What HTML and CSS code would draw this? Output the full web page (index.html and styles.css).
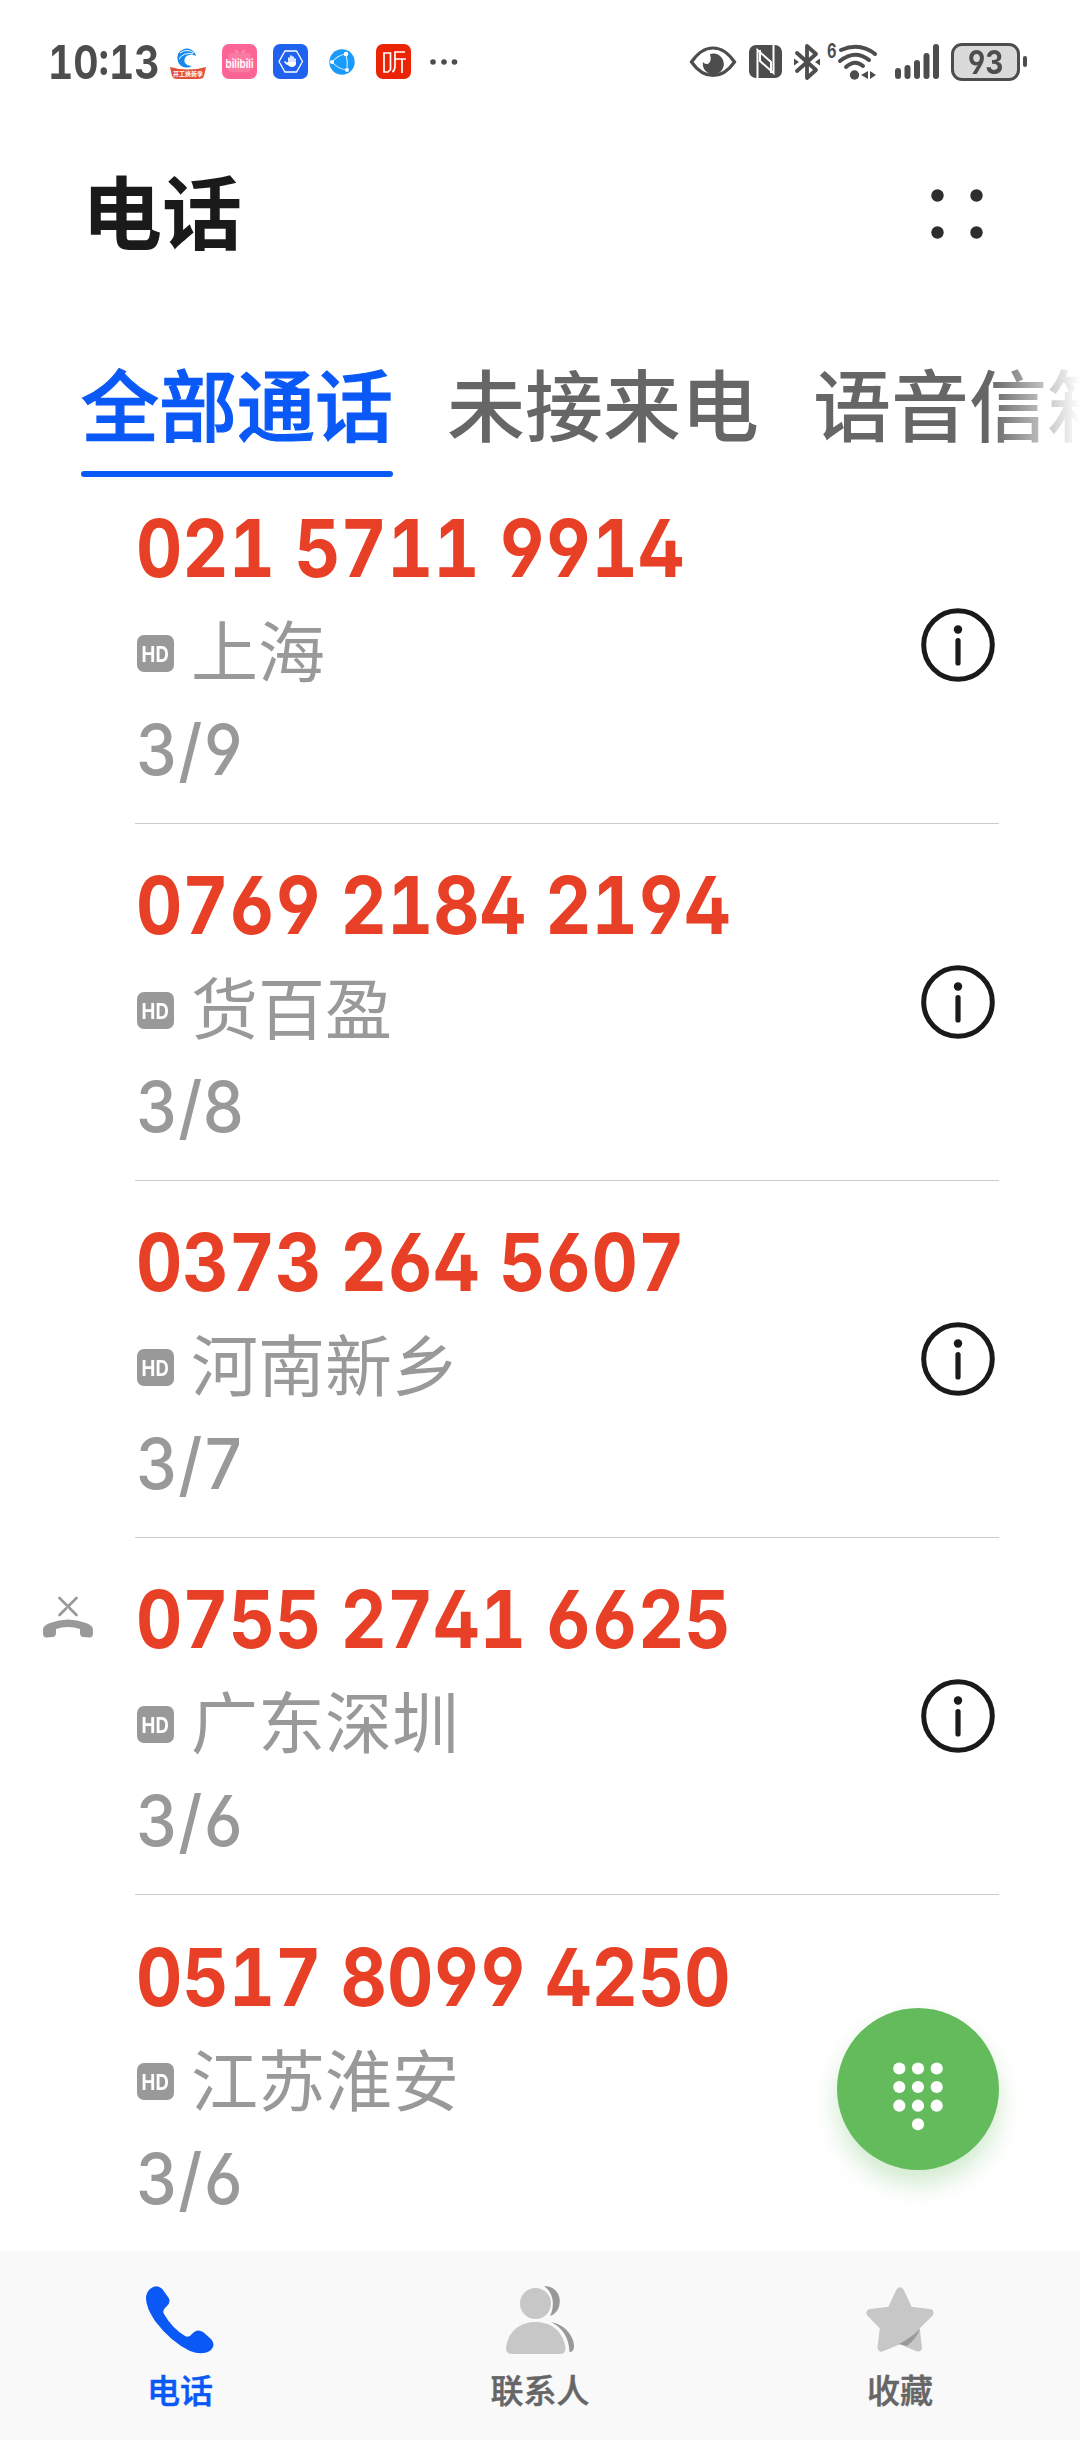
FILE: index.html
```
<!DOCTYPE html>
<html lang="zh-CN">
<head>
    <meta charset="UTF-8">
    <meta name="viewport" content="width=device-width, initial-scale=1.0">
    <title>电话</title>
    <link rel="stylesheet" href="styles.css">
</head>
<body>
    <div class="phone">
        <!-- 状态栏 -->
        <div class="status-bar">
            <div class="time"><span>10:13</span></div>
            <div class="app-icons">
                <svg width="36" height="36" viewBox="0 0 36 36">
                    <path d="M26 12A9.500 9.500 0 1 0 22 22C16 22 13 18 15 14C17 10 22 10 26 12Z" fill="#1488ee"/>
                    <path d="M10 9Q17 4 24 9M9 15Q13 8 23 10" fill="none" stroke="#fff" stroke-width="1"/>
                    <path d="M0 23Q18 28 36 23L34 32Q33 35 29 35H7Q3 35 2 32Z" fill="#e2503a"/>
                    <text x="18" y="32" class="promo">开工焕新季</text>
                </svg>
                <svg width="35" height="35" viewBox="0 0 35 35">
                    <rect width="35" height="35" rx="7" fill="#fb6494"/>
                    <path d="M13 6l3 3M23 6l-3 3" stroke="#fd8fb1" stroke-width="2"/>
                    <rect x="6" y="9" width="23" height="19" rx="4" fill="#fb7aa2"/>
                    <text x="17.500" y="23.500" class="bili" textLength="28" lengthAdjust="spacingAndGlyphs">bilibili</text>
                </svg>
                <svg width="35" height="35" viewBox="0 0 35 35">
                    <rect width="35" height="35" rx="7" fill="#1f62ef"/>
                    <path d="M12 7H23.500L29.500 17.500L23.500 28H12L6 17.500Z" fill="none" stroke="#fff" stroke-width="1.300"/>
                    <path d="M14 20l-2-2M16 20v-6M18 20v-8M20 20v-7M22 20v-5" stroke="#fff" stroke-width="1.700" stroke-linecap="round"/>
                    <path d="M15 18h8v2q-1 3-4 3t-6-4z" fill="#fff"/>
                </svg>
                <svg width="26" height="26" viewBox="0 0 26 26">
                    <circle cx="13" cy="13" r="12.700" fill="#1a9bfa"/>
                    <path d="M17 5Q9 6 3 13Q9 20 18 21M17 5Q19 13 18 21" fill="none" stroke="#c9ecff" stroke-width="1.100"/>
                    <g fill="#fff"><circle cx="17" cy="5" r="2.300"/><circle cx="3" cy="13" r="2"/><circle cx="18" cy="21" r="2"/></g>
                </svg>
                <svg width="35" height="35" viewBox="0 0 35 35">
                    <rect width="35" height="35" rx="7" fill="#ea2405"/>
                    <path d="M8 9H14.500V25.500L12 28H8ZM29 8H19V22Q19 26 16.500 28M19 15H30M26 15V29" fill="none" stroke="#fff" stroke-width="1.700"/>
                </svg>
                <svg width="28" height="6" viewBox="0 0 28 6" fill="#4d4d4d">
                    <circle cx="3" cy="3" r="2.800"/><circle cx="14" cy="3" r="2.800"/><circle cx="24.500" cy="3" r="2.800"/>
                </svg>
            </div>
            <div class="sys-icons">
                <svg class="eye" width="46" height="32" viewBox="0 0 46 32">
                    <path d="M1.500 16Q11 2 23 2T44.500 16Q35 29.500 23 29.500T1.500 16Z" fill="none" stroke="#4d4d4d" stroke-width="3.200"/>
                    <path d="M20 8A10.500 10.500 0 1 1 13 16Q15 19 18.500 17.500Q22 15 20 8Z" fill="#4d4d4d"/>
                </svg>
                <svg class="nfc" width="33" height="33" viewBox="0 0 33 33">
                    <rect width="33" height="33" rx="7" fill="#4d4d4d"/>
                    <path d="M8.500 33V5L22 17V28M24.500 0V28L11 16V5" fill="none" stroke="#fff" stroke-width="2"/>
                </svg>
                <svg class="bt" width="26" height="36" viewBox="0 0 26 36" fill="none" stroke="#4d4d4d" stroke-width="3.800" stroke-linejoin="round" stroke-linecap="round">
                    <path d="M3 9L22 26L13 34V2L22 10L3 27"/>
                    <path d="M0 14.500L5 18L0 21.500ZM26 14.500L21 18L26 21.500Z" fill="#4d4d4d" stroke="none"/>
                </svg>
                <svg class="wifi" width="51" height="38" viewBox="0 0 51 38">
                    <text x="0" y="15" class="wifi-gen" textLength="9.500" lengthAdjust="spacingAndGlyphs">6</text>
                    <g fill="none" stroke="#4d4d4d" stroke-width="4" stroke-linecap="round">
                        <path d="M14 7Q33 -1 48 11M13 18Q28 6 42 17M19 24Q28 16 36 23"/>
                    </g>
                    <circle cx="27.500" cy="32" r="4.700" fill="#4d4d4d"/>
                    <path d="M41 28V36L34 32ZM43 28V36L49 32Z" fill="#4d4d4d"/>
                </svg>
                <svg class="signal" width="45" height="36" viewBox="0 0 45 36" fill="#4d4d4d">
                    <rect x="0" y="24" width="6" height="11" rx="3"/>
                    <rect x="9.500" y="21" width="6" height="14" rx="3"/>
                    <rect x="19" y="16" width="6" height="19" rx="3"/>
                    <rect x="28.500" y="9" width="6" height="26" rx="3"/>
                    <rect x="38" y="0" width="6" height="35" rx="3"/>
                </svg>
                <div class="battery"><span>93</span></div>
                <div class="battery-cap"></div>
            </div>
        </div>

        <header class="header">
            <h1>电话</h1>
            <svg width="52" height="50" viewBox="0 0 52 50" fill="#2e2e2e">
                <circle cx="6.500" cy="6.500" r="6.200"/><circle cx="45.500" cy="6.500" r="6.200"/>
                <circle cx="6.500" cy="43.500" r="6.200"/><circle cx="45.500" cy="43.500" r="6.200"/>
            </svg>
        </header>

        <nav class="tabs">
            <a class="tab active">全部通话</a>
            <a class="tab">未接来电</a>
            <a class="tab">语音信箱</a>
        </nav>

        <svg class="defs">
            <symbol id="info" viewBox="0 0 74 74">
                <circle cx="37" cy="37" r="34.300" fill="none" stroke="#1a1a1a" stroke-width="5"/>
                <circle cx="37" cy="21.500" r="4.200" fill="#1a1a1a"/>
                <path d="M37 32.500V55" stroke="#1a1a1a" stroke-width="5.200" stroke-linecap="round"/>
            </symbol>
        </svg>

        <main class="calls">
            <div class="call">
                <div class="detail">
                    <div class="number">021 5711 9914</div>
                    <div class="place"><span class="hd"><b>HD</b></span>上海</div>
                    <div class="date">3/9</div>
                </div>
                <svg class="info"><use href="#info"/></svg>
            </div>
            <div class="call">
                <div class="detail">
                    <div class="number">0769 2184 2194</div>
                    <div class="place"><span class="hd"><b>HD</b></span>货百盈</div>
                    <div class="date">3/8</div>
                </div>
                <svg class="info"><use href="#info"/></svg>
            </div>
            <div class="call">
                <div class="detail">
                    <div class="number">0373 264 5607</div>
                    <div class="place"><span class="hd"><b>HD</b></span>河南新乡</div>
                    <div class="date">3/7</div>
                </div>
                <svg class="info"><use href="#info"/></svg>
            </div>
            <div class="call">
                <svg class="missed" width="52" height="44" viewBox="0 0 52 44">
                    <path d="M17.500 3L34.500 20M34.500 3L27 10.500M24 13.500L17.500 20" fill="none" stroke="#999" stroke-width="2.700" stroke-linecap="round"/>
                    <path d="M1 38Q0 30 8 28Q26 21 44 28Q52 30 51 38Q51 43 47 42.500L41 42Q38 41.500 38 38V34Q26 30 14 34V38Q14 41.500 11 42L5 42.500Q1 43 1 38Z" fill="#999"/>
                </svg>
                <div class="detail">
                    <div class="number">0755 2741 6625</div>
                    <div class="place"><span class="hd"><b>HD</b></span>广东深圳</div>
                    <div class="date">3/6</div>
                </div>
                <svg class="info"><use href="#info"/></svg>
            </div>
            <div class="call">
                <div class="detail">
                    <div class="number">0517 8099 4250</div>
                    <div class="place"><span class="hd"><b>HD</b></span>江苏淮安</div>
                    <div class="date">3/6</div>
                </div>
            </div>
        </main>

        <!-- 拨号按钮 -->
        <div class="dial">
            <svg width="50" height="69" viewBox="0 0 50 69" fill="#fff">
                <circle cx="6.300" cy="6.500" r="6.100"/><circle cx="25" cy="6.500" r="6.100"/><circle cx="43.700" cy="6.500" r="6.100"/>
                <circle cx="6.300" cy="25" r="6.100"/><circle cx="25" cy="25" r="6.100"/><circle cx="43.700" cy="25" r="6.100"/>
                <circle cx="6.300" cy="43.700" r="6.100"/><circle cx="25" cy="43.700" r="6.100"/><circle cx="43.700" cy="43.700" r="6.100"/>
                <circle cx="25" cy="62.300" r="6.100"/>
            </svg>
        </div>

        <footer class="bottom-nav">
            <a class="nav-item active">
                <svg width="68" height="68" viewBox="0 0 68 68">
                    <path d="M4 3Q11 -3 17 4L22 11Q26 16 20 21Q16 24 18 28Q26 42 39 50Q43 52 46 48Q51 42 57 46L65 53Q70 59 65 64Q57 70 44 65Q25 56 9 35Q-6 12 4 3Z" fill="#0a59f7"/>
                </svg>
                <span>电话</span>
            </a>
            <a class="nav-item">
                <svg width="68" height="68" viewBox="0 0 68 68">
                    <path d="M38 0C58 0 58 26 44 30C49 20 48 7 38 0ZM45 36C61 39 68 52 68 60Q68 66 63.500 66C63 52 57 42 45 36Z" fill="#999"/>
                    <circle cx="29.500" cy="17.500" r="15.500" fill="#c7c7c7"/>
                    <path d="M6 68Q0 68 0 62C2 45 14 36 29.500 36S57 45 59.500 62Q59.500 68 54 68Z" fill="#c7c7c7"/>
                </svg>
                <span>联系人</span>
            </a>
            <a class="nav-item">
                <svg width="68" height="68" viewBox="0 0 68 68">
                    <path d="M34 5.500L43 24.500L63.500 27L49.500 41L52 61.500L34 54L15.500 61.500L18 41L4.500 27L25 24.500Z" fill="#c7c7c7" stroke="#c7c7c7" stroke-width="8" stroke-linejoin="round"/>
                    <path d="M33 58Q45 52 54 43Q50 53 41 60Z" fill="#999"/>
                </svg>
                <span>收藏</span>
            </a>
        </footer>
    </div>
</body>
</html>
```

FILE: styles.css
```
* {
    box-sizing: border-box;
}
body {
    margin: 0;
    background-color: #fff;
    font-family: Inter, "Noto Sans CJK SC", sans-serif;
}
svg {
    display: block;
    flex-shrink: 0;
    overflow: visible;
}
.phone {
    position: relative;
    width: 1080px;
    height: 2440px;
    overflow: hidden;
    display: flex;
    flex-direction: column;
}

/* 状态栏 */
.status-bar {
    display: flex;
    align-items: center;
    height: 123px;
    padding-left: 48px;
    color: #4d4d4d;
}
.time {
    width: 122px;
    font-size: 46px;
    font-weight: 650;
    white-space: nowrap;
    font-feature-settings: "tnum";
}
.time span {
    display: inline-block;
    transform: scaleX(0.85);
    transform-origin: left;
}
.app-icons {
    display: flex;
    align-items: center;
    gap: 16px;
}
.app-icons svg:nth-child(4) {
    margin: 0 5px;
}
.app-icons svg:nth-child(6) {
    margin-left: 3px;
}
.promo {
    font-size: 6px;
    font-weight: 700;
    fill: #fff;
    text-anchor: middle;
}
.bili {
    font-size: 12px;
    font-weight: 600;
    fill: #fff;
    text-anchor: middle;
}
.sys-icons {
    display: flex;
    align-items: center;
    margin-left: auto;
    padding-right: 53px;
}
.nfc {
    margin-left: 13px;
}
.bt {
    margin-left: 12px;
}
.wifi {
    margin-left: 7px;
}
.wifi-gen {
    font-size: 20px;
    font-weight: 700;
    fill: #4d4d4d;
}
.signal {
    margin-left: 17px;
}
.battery {
    display: flex;
    justify-content: center;
    width: 69px;
    height: 38px;
    margin-left: 11px;
    border: 3px solid #4d4d4d;
    border-radius: 11px;
    background-color: #dadada;
    font-size: 33px;
    font-weight: 700;
    line-height: 33px;
    font-feature-settings: "cv04";
}
.battery span {
    transform: scaleX(0.85);
}
.battery-cap {
    width: 4px;
    height: 11px;
    margin-left: 3px;
    border-radius: 2px;
    background-color: #4d4d4d;
}

/* 标题 */
.header {
    display: flex;
    align-items: center;
    justify-content: space-between;
    height: 182px;
    padding: 0 97px 0 82px;
}
.header h1 {
    margin: 0;
    color: #1a1a1a;
    font-size: 80px;
    font-weight: 700;
    line-height: 182px;
}

/* 标签 */
.tabs {
    display: flex;
    gap: 54px;
    height: 172px;
    padding: 50px 0 0 81px;
    overflow: hidden;
    -webkit-mask-image: linear-gradient(to right, #000 990px, transparent 1080px);
    mask-image: linear-gradient(to right, #000 990px, transparent 1080px);
}
.tab {
    flex-shrink: 0;
    width: 312px;
    height: 122px;
    color: #666;
    font-size: 78px;
    font-weight: 500;
    line-height: 105px;
    white-space: nowrap;
}
.tab.active {
    position: relative;
    color: #0a59f7;
    -webkit-text-stroke: 1.2px #0a59f7;
}
.tab.active::after {
    content: "";
    position: absolute;
    left: 0;
    right: 0;
    bottom: 0;
    height: 6px;
    border-radius: 3px;
    background-color: #0a59f7;
}

/* 通话列表 */
.defs {
    width: 0;
    height: 0;
}
.calls {
    flex: 1;
    min-height: 0;
    margin-top: -10px;
    overflow: hidden;
}
.call {
    display: flex;
    align-items: center;
    justify-content: space-between;
    position: relative;
    height: 357px;
    margin: 0 81px 0 135px;
    border-bottom: 1px solid #ccc;
}
.call:last-child {
    border-bottom: none;
}
.detail {
    padding: 4px 0 0 1px;
}
.number {
    color: #e84026;
    font-size: 80px;
    font-weight: 650;
    line-height: 104px;
    white-space: nowrap;
    font-feature-settings: "tnum", "cv02", "cv03", "cv04";
    transform: scaleX(0.896);
    transform-origin: left;
}
.place {
    display: flex;
    align-items: center;
    height: 102px;
    padding-top: 4px;
    color: #999;
    font-size: 67px;
    line-height: 98px;
}
.hd {
    display: flex;
    justify-content: center;
    width: 37px;
    height: 37px;
    margin: 0 17px 0 1px;
    border-radius: 7px;
    background-color: #999;
    color: #fff;
    font-size: 22px;
    line-height: 38px;
}
.hd b {
    transform: scaleX(0.84);
}
.date {
    color: #999;
    font-size: 70px;
    font-weight: 500;
    line-height: 96px;
    font-feature-settings: "tnum", "cv02", "cv03", "cv04";
    transform: scaleX(0.93);
    transform-origin: left;
}
.info {
    width: 74px;
    height: 74px;
    margin-right: 4px;
}
.missed {
    position: absolute;
    left: -93px;
    top: 57px;
}

/* 拨号按钮 */
.dial {
    position: absolute;
    right: 81px;
    bottom: 270px;
    display: flex;
    align-items: center;
    justify-content: center;
    width: 162px;
    height: 162px;
    padding-top: 14px;
    border-radius: 50%;
    background-color: #64bb5c;
    box-shadow: 0 14px 24px rgba(100, 187, 92, 0.3);
}

/* 底部导航 */
.bottom-nav {
    display: flex;
    height: 189px;
    background-color: #f9f9f9;
}
.nav-item {
    flex: 1;
    display: flex;
    flex-direction: column;
    align-items: center;
    padding-top: 35px;
    color: #666;
    font-size: 33px;
    font-weight: 500;
}
.nav-item span {
    margin-top: 16px;
    line-height: 42px;
    -webkit-text-stroke: 0.5px currentColor;
}
.nav-item.active {
    color: #0a59f7;
}
```
